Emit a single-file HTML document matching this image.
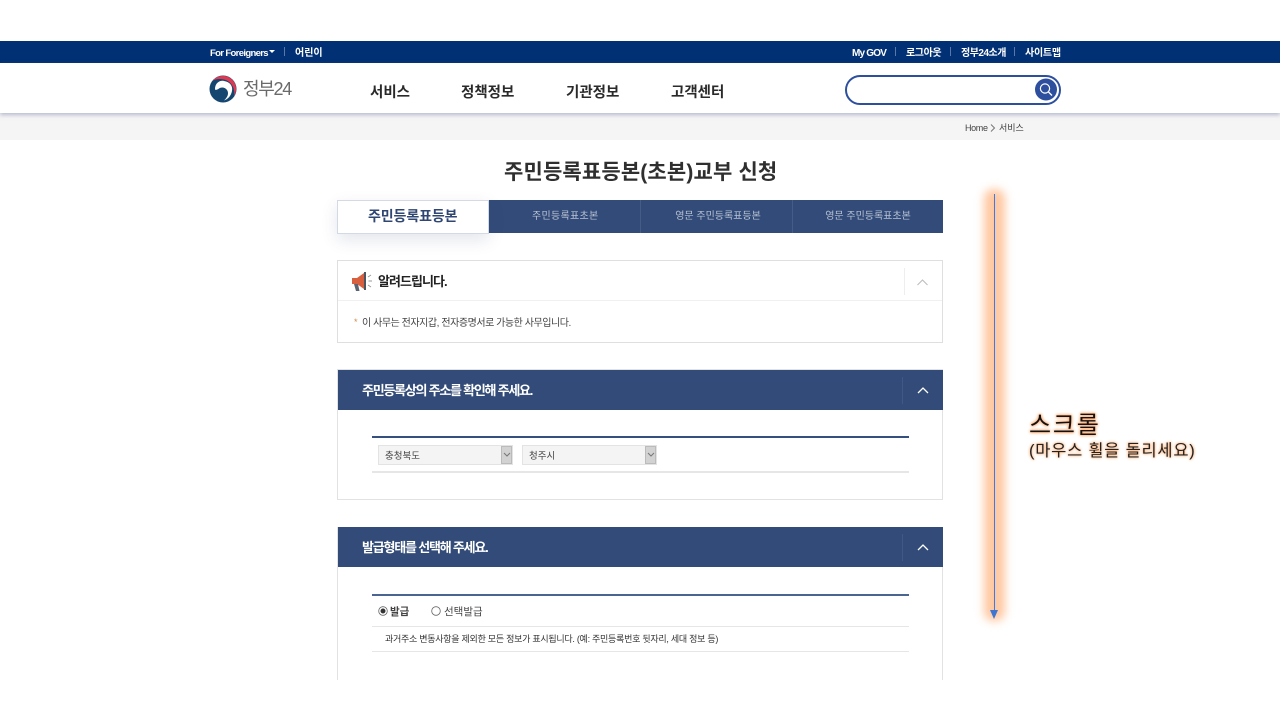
<!DOCTYPE html>
<html lang="ko"><head><meta charset="utf-8"><title>정부24</title>
<style>
html,body{margin:0;padding:0;width:1280px;height:720px;overflow:hidden;background:#fff}
body{position:relative;font-family:"Liberation Sans","Noto Sans CJK KR",sans-serif;color:#333}
div,span.t,svg{position:absolute}
.t{white-space:nowrap;line-height:1;position:absolute}
.ln{background:#e6e6e6}
.sel{background:#f4f4f4;border:1px solid #e3e3e3;box-sizing:border-box;height:20px}
.sel i{position:absolute;right:0;top:0;width:11px;height:18px;background:#d2d2d2;border:1px solid #bbb;box-sizing:border-box}
</style></head><body>
<!-- top bar -->
<div style="left:0;top:41px;width:1280px;height:22px;background:#023074"></div>
<span class="t" style="left:210px;top:49px;font-size:9.5px;color:#fff;font-weight:bold;letter-spacing:-.65px">For Foreigners</span>
<div style="left:269px;top:50px;width:0;height:0;border-left:3px solid transparent;border-right:3px solid transparent;border-top:3px solid #fff"></div>
<div style="left:284px;top:47px;width:1px;height:9px;background:#5a78a5"></div>
<span class="t" style="left:295px;top:49px;font-size:10px;color:#fff;font-weight:bold">어린이</span>
<span class="t" style="left:852px;top:49px;font-size:10px;color:#fff;font-weight:bold;letter-spacing:-.8px">My GOV</span>
<div style="left:895px;top:47px;width:1px;height:9px;background:#5a78a5"></div>
<span class="t" style="left:906px;top:49px;font-size:10px;color:#fff;font-weight:bold;letter-spacing:-.4px">로그아웃</span>
<div style="left:950px;top:47px;width:1px;height:9px;background:#5a78a5"></div>
<span class="t" style="left:961px;top:49px;font-size:10px;color:#fff;font-weight:bold;letter-spacing:-.5px">정부24소개</span>
<div style="left:1014px;top:47px;width:1px;height:9px;background:#5a78a5"></div>
<span class="t" style="left:1025px;top:49px;font-size:10px;color:#fff;font-weight:bold;letter-spacing:-.25px">사이트맵</span>

<!-- header -->
<div style="left:0;top:113px;width:1280px;height:27px;background:#f6f5f6"></div>
<div style="left:0;top:63px;width:1280px;height:50px;background:#fff;box-shadow:0 2px 4px rgba(120,130,165,.5)"></div>
<svg style="left:209px;top:75px" width="29" height="28" viewBox="0 0 29 28">
<circle cx="14" cy="14" r="13.5" fill="#14466f"/>
<path d="M6 14C6 8 11 5 15 6C21 7 24 11 23 16C22 21 19 24 15 25.500C19 22 20 18 18 15C16 12 12 12 10 13.500C8 15 6 15.500 6 14Z" fill="#fff"/>
<path d="M3.500 6C7 1 15-1 21 3C27 7 29 14 25 21C26.500 13 22 6 15 4.500C10 3.500 6 4 3.500 6Z" fill="#dd3a52"/>
</svg>
<span class="t" style="left:243px;top:80px;font-size:18px;color:#6a6a6a;letter-spacing:-1.3px">정부24</span>
<span class="t" style="left:370px;top:86px;font-size:14.5px;font-weight:bold;color:#2a2a2a">서비스</span>
<span class="t" style="left:461px;top:86px;font-size:14.5px;font-weight:bold;color:#2a2a2a">정책정보</span>
<span class="t" style="left:566px;top:86px;font-size:14.5px;font-weight:bold;color:#2a2a2a">기관정보</span>
<span class="t" style="left:671px;top:86px;font-size:14.5px;font-weight:bold;color:#2a2a2a">고객센터</span>
<div style="left:845px;top:75px;width:216px;height:30px;box-sizing:border-box;border:2px solid #2d4f9e;border-radius:15px;background:#fff"></div>
<svg style="left:1034px;top:78px" width="24" height="24" viewBox="0 0 24 24">
<circle cx="12" cy="11.500" r="11" fill="#2d4f9e"/>
<circle cx="11" cy="10.500" r="4.600" fill="none" stroke="#fff" stroke-width="1.200"/>
<path d="M14.500 14l3.500 3.500" stroke="#fff" stroke-width="1.300"/>
</svg>
<span class="t" style="left:965px;top:124px;font-size:9px;color:#444;letter-spacing:-.35px">Home</span>
<svg style="left:990px;top:124px" width="6" height="8" viewBox="0 0 6 8"><path d="M1 .5 4.500 4 1 7.500" fill="none" stroke="#777"/></svg>
<span class="t" style="left:999px;top:124px;font-size:9px;color:#444">서비스</span>

<!-- title -->
<span class="t" style="left:504px;top:162px;font-size:21px;font-weight:bold;color:#2f2f2f;letter-spacing:.15px">주민등록표등본(초본)교부 신청</span>

<!-- tabs -->
<div style="left:338px;top:200px;width:605px;height:33px;background:#324b78"></div>
<div style="left:337px;top:200px;width:152px;height:34px;box-sizing:border-box;background:#fff;border:1px solid #d4d9e6;box-shadow:0 6px 16px rgba(60,80,130,.14)"></div>
<div style="left:640px;top:200px;width:1px;height:33px;background:#445c88"></div>
<div style="left:792px;top:200px;width:1px;height:33px;background:#445c88"></div>
<span class="t" style="left:368px;top:209px;font-size:14px;font-weight:bold;color:#2f4672;letter-spacing:-.1px">주민등록표등본</span>
<span class="t" style="left:532px;top:212px;font-size:10px;color:#b8c2d4;letter-spacing:.3px">주민등록표초본</span>
<span class="t" style="left:644px;top:212px;width:148px;text-align:center;font-size:10px;color:#b8c2d4">영문 주민등록표등본</span>
<span class="t" style="left:794px;top:212px;width:148px;text-align:center;font-size:10px;color:#b8c2d4">영문 주민등록표초본</span>

<!-- notice -->
<div style="left:337px;top:260px;width:606px;height:83px;box-sizing:border-box;border:1px solid #dfdfdf"></div>
<div style="left:338px;top:300px;width:604px;height:1px;background:#f0f0f0"></div>
<div style="left:904px;top:268px;width:1px;height:27px;background:#eee"></div>
<svg style="left:917px;top:279px" width="11" height="7" viewBox="0 0 11 7"><path d="M.5 6 5.500 1l5 5" fill="none" stroke="#bbb"/></svg>
<svg style="left:351px;top:271px" width="22" height="21" viewBox="0 0 22 21">
<path d="M1 7h5v6H1z" fill="#d9603f"/>
<path d="M6 7l7-5v16l-7-5z" fill="#d9603f"/>
<path d="M13 1h2v18h-2z" fill="#4d5560"/>
<path d="M3 13h4l1.500 7H5z" fill="#5b6470"/>
<path d="M17 6l3-2M17.500 10H21M17 14l3 2" stroke="#999" stroke-width="1"/>
</svg>
<span class="t" style="left:378px;top:275px;font-size:13px;font-weight:bold;color:#222;letter-spacing:-.95px">알려드립니다.</span>
<span class="t" style="left:354px;top:318px;font-size:9px;color:#d08a50">*</span>
<span class="t" style="left:362px;top:319px;font-size:10px;color:#444;letter-spacing:-.45px">이 사무는 전자지갑, 전자증명서로 가능한 사무입니다.</span>

<!-- address panel -->
<div style="left:337px;top:369px;width:606px;height:131px;box-sizing:border-box;border:1px solid #e2e2e2"></div>
<div style="left:338px;top:370px;width:605px;height:40px;background:#324b78"></div>
<div style="left:902px;top:377px;width:1px;height:27px;background:#3f5884"></div>
<svg style="left:917px;top:386px" width="12" height="8" viewBox="0 0 12 8"><path d="M1 7l5-5 5 5" fill="none" stroke="#fff" stroke-width="1.300"/></svg>
<span class="t" style="left:362px;top:384px;font-size:13px;font-weight:bold;color:#fff;letter-spacing:-1.25px">주민등록상의 주소를 확인해 주세요.</span>
<div style="left:372px;top:436px;width:537px;height:2px;background:#35507f"></div>
<div class="sel" style="left:378px;top:445px;width:135px"><i></i></div>
<svg style="left:503px;top:452px" width="8" height="6" viewBox="0 0 8 6"><path d="M1 1l3 3 3-3" fill="none" stroke="#777"/></svg>
<div class="sel" style="left:522px;top:445px;width:135px"><i></i></div>
<svg style="left:647px;top:452px" width="8" height="6" viewBox="0 0 8 6"><path d="M1 1l3 3 3-3" fill="none" stroke="#777"/></svg>
<span class="t" style="left:385px;top:452px;font-size:9.500px;color:#444">충청북도</span>
<span class="t" style="left:529px;top:452px;font-size:9.500px;color:#444">청주시</span>
<div class="ln" style="left:372px;top:471px;width:537px;height:2px"></div>

<!-- issue panel -->
<div style="left:337px;top:527px;width:606px;height:153px;box-sizing:border-box;border:1px solid #e2e2e2;border-bottom:0"></div>
<div style="left:338px;top:527px;width:605px;height:40px;background:#324b78"></div>
<div style="left:902px;top:534px;width:1px;height:27px;background:#3f5884"></div>
<svg style="left:917px;top:543px" width="12" height="8" viewBox="0 0 12 8"><path d="M1 7l5-5 5 5" fill="none" stroke="#fff" stroke-width="1.300"/></svg>
<span class="t" style="left:362px;top:541px;font-size:13px;font-weight:bold;color:#fff;letter-spacing:-1.2px">발급형태를 선택해 주세요.</span>
<div style="left:372px;top:594px;width:537px;height:2px;background:#4a6592"></div>
<svg style="left:378px;top:606px" width="10" height="10" viewBox="0 0 10 10"><circle cx="5" cy="5" r="4.300" fill="#fff" stroke="#666" stroke-width=".8"/><circle cx="5" cy="5" r="2.500" fill="#333"/></svg>
<span class="t" style="left:390px;top:607px;font-size:10.500px;font-weight:bold;color:#444">발급</span>
<svg style="left:431px;top:606px" width="10" height="10" viewBox="0 0 10 10"><circle cx="5" cy="5" r="4.300" fill="#fff" stroke="#666" stroke-width=".8"/></svg>
<span class="t" style="left:444px;top:607px;font-size:10.500px;color:#444">선택발급</span>
<div class="ln" style="left:372px;top:626px;width:537px;height:1px"></div>
<span class="t" style="left:385px;top:635px;font-size:9px;color:#333;letter-spacing:-.27px">과거주소 변동사항을 제외한 모든 정보가 표시됩니다. (예: 주민등록번호 뒷자리, 세대 정보 등)</span>
<div class="ln" style="left:372px;top:651px;width:537px;height:1px"></div>

<!-- scroll overlay -->
<div style="left:984px;top:189px;width:21px;height:432px;background:#ffc8a2;border-radius:9px;filter:blur(4.500px)"></div>
<div style="left:994px;top:194px;width:1px;height:416px;background:#3f7ae0"></div>
<div style="left:990px;top:610px;width:0;height:0;border-left:4px solid transparent;border-right:4px solid transparent;border-top:9px solid #3f75d0"></div>
<span class="t" style="left:1029px;top:414px;font-size:24px;color:#111;letter-spacing:1.8px;text-shadow:0 0 3px #ffb27a,0 0 3px #ffb27a,0 0 2px #ffb27a">스크롤</span>
<span class="t" style="left:1029px;top:443px;font-size:16.500px;color:#222;letter-spacing:.75px;text-shadow:0 0 3px #ffb27a,0 0 2px #ffb27a">(마우스 휠을 돌리세요)</span>
</body></html>
